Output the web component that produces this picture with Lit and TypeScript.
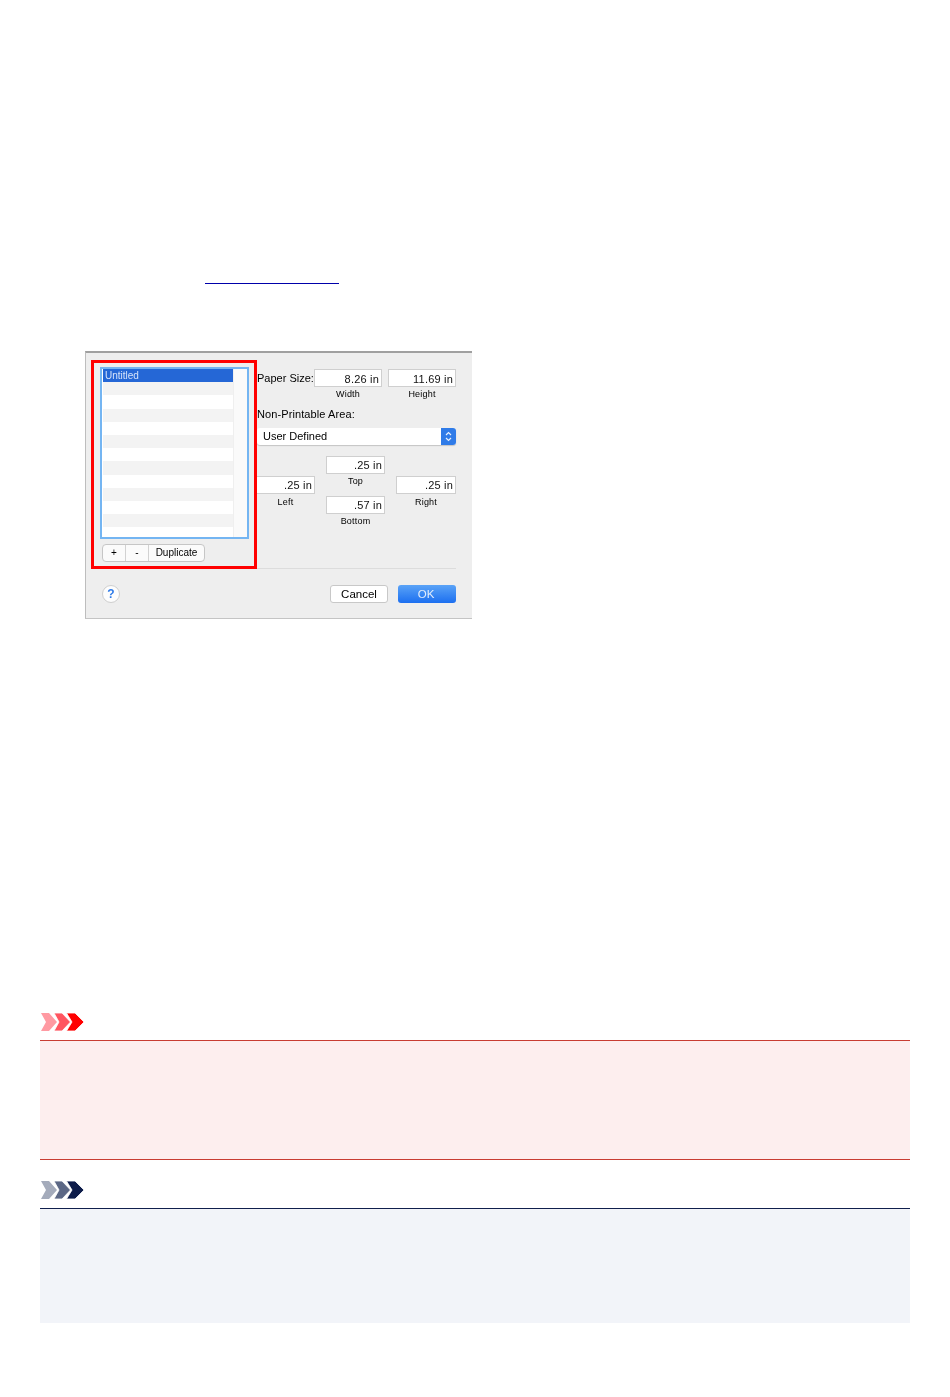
import { LitElement, html, css } from "lit";
import { customElement } from "lit/decorators.js";

const chevrons = (a: string, b: string, c: string) => html`
  <svg class="chev" width="44" height="18" viewBox="0 0 44 18">
    <polygon points="1,0 9,0 17,9 9,18 1,18 6,9" fill=${a}></polygon>
    <polygon points="14,0 22,0 30.500,9 22,18 14,18 19,9" fill=${b} stroke="#fff" stroke-width="0.800"></polygon>
    <polygon points="26.500,0 35,0 44,9 35,18 26.500,18 32,9" fill=${c} stroke="#fff" stroke-width="0.800"></polygon>
  </svg>`;

@customElement("app-root")
export class AppRoot extends LitElement {
  static styles = css`
    :host { display: block; height: 1397px; padding: 283px 40px 0; box-sizing: border-box; background: #fff; font-family: "Liberation Sans", Arial, sans-serif; overflow: hidden; }
    .link { width: 134px; height: 1px; margin-left: 165px; background: #0000aa; }
    .figure { position: relative; width: 387px; height: 268px; margin: 67px 0 0 45px; }
    .shot { box-sizing: border-box; width: 100%; height: 100%; padding: 14px 16px 0 14px; background: #eeeeee; border-top: 2px solid #a0a0a0; border-left: 1px solid #bdbdbd; border-bottom: 1px solid #c4c4c4; filter: blur(0.6px); color: #000; font-size: 10.5px; }
    .highlight { position: absolute; left: 6px; top: 9px; width: 166px; height: 209px; box-sizing: border-box; border: 3px solid #ff0000; }
    .main { display: flex; gap: 8px; height: 195px; }
    .left { width: 149px; flex: none; }
    .list { box-sizing: border-box; height: 172px; border: 2px solid #74b5f2; background: #fff; display: flex; }
    .rows { width: 130px; margin-left: 1px; flex: none; overflow: hidden; }
    .row { height: 13.2px; }
    .row.alt { background: #f3f3f3; }
    .row.sel { background: #2567d6; color: #d5e2fa; font-size: 10px; line-height: 13px; padding-left: 2px; box-sizing: border-box; }
    .track { flex: 1; background: #fafafa; border-left: 1px solid #efefef; }
    .seg { display: flex; width: 103px; height: 18px; margin: 5px 0 0 2px; box-sizing: border-box; border: 1px solid #c6c6c6; border-radius: 4px; background: #fbfbfb; font-size: 10px; line-height: 16px; text-align: center; }
    .seg span { width: 22px; border-right: 1px solid #d2d2d2; }
    .seg span:last-child { flex: 1; border: 0; }
    .right { flex: 1; padding-top: 2px; min-width: 0; }
    .paper { display: flex; gap: 6px; }
    .paper-label { width: 57px; margin-right: -6px; line-height: 18px; white-space: nowrap; font-size: 11px; }
    .field { flex: none; }
    .paper .field { width: 68px; }
    .input { box-sizing: border-box; height: 18px; background: #fff; border: 1px solid #cfcfcf; text-align: right; padding-right: 2px; line-height: 18px; font-size: 11px; letter-spacing: 0.2px; color: #111; white-space: nowrap; }
    .cap { margin-top: 2px; font-size: 9px; letter-spacing: 0.2px; line-height: 11px; text-align: center; }
    .np { margin-top: 8px; line-height: 13px; font-size: 11px; letter-spacing: 0.1px; }
    .select { display: flex; justify-content: space-between; height: 17px; margin-top: 7px; box-sizing: border-box; background: #fff; border-radius: 3px; box-shadow: 0 1px 1px #c4c4c4; padding-left: 6px; line-height: 16px; font-size: 11px; }
    .select i { width: 15px; display: flex; align-items: center; justify-content: center; background: #2f7be8; border-radius: 0 3px 3px 0; }
    .margins { display: flex; gap: 11px; margin: 11px 0 0 -1px; }
    .margins .input { line-height: 17px; }
    .col { width: 59px; flex: none; }
    .col.side { margin-top: 20px; }
    .col.side .cap { margin-top: 3px; }
    .col:last-child { width: 60px; }
    .col .field + .field { margin-top: 9px; }
    .foot { display: flex; align-items: flex-start; gap: 10px; margin-top: 6px; padding-top: 16px; border-top: 1px solid #dcdcdc; }
    .help { width: 18px; height: 18px; margin-left: 2px; box-sizing: border-box; border: 1px solid #cfcfcf; border-radius: 50%; background: #fdfdfd; color: #2f7be8; font-size: 12px; font-weight: 700; line-height: 16px; text-align: center; }
    .push { flex: 1; }
    .btn { width: 58px; height: 18px; box-sizing: border-box; border-radius: 3px; background: #fff; border: 1px solid #c8c8c8; text-align: center; line-height: 16px; font-size: 11.5px; }
    .btn.ok { border: 0; line-height: 18px; padding-right: 2px; background: linear-gradient(#5aa3f7, #1c6ff0); color: #e4eefc; }
    .chev { display: block; }
    .imp { margin-top: 394px; }
    .note { margin-top: 21px; }
    .panel { box-sizing: border-box; margin-top: 9px; }
    .panel.red { height: 120px; background: #fdeeee; border-top: 1px solid #c83c32; border-bottom: 1px solid #c83c32; }
    .panel.blue { height: 115px; background: #f2f4f9; border-top: 1px solid #101f4c; }
  `;

  render() {
    const rows = Array.from({ length: 12 }, (_, i) => i);
    return html`
      <div class="link"></div>
      <div class="figure">
        <div class="shot">
          <div class="main">
            <div class="left">
              <div class="list">
                <div class="rows">
                  <div class="row sel">Untitled</div>
                  ${rows.map((i) => html`<div class="row ${i % 2 === 0 ? "alt" : ""}"></div>`)}
                </div>
                <div class="track"></div>
              </div>
              <div class="seg"><span>+</span><span>-</span><span>Duplicate</span></div>
            </div>
            <div class="right">
              <div class="paper">
                <div class="paper-label">Paper Size:</div>
                <div class="field"><div class="input">8.26 in</div><div class="cap">Width</div></div>
                <div class="field"><div class="input">11.69 in</div><div class="cap">Height</div></div>
              </div>
              <div class="np">Non-Printable Area:</div>
              <div class="select">
                <span>User Defined</span>
                <i><svg width="9" height="13" viewBox="0 0 9 13" fill="none" stroke="#e8f0fd" stroke-width="1.2"><path d="M2 5l2.5-2.5L7 5M2 8l2.5 2.500L7 8"></path></svg></i>
              </div>
              <div class="margins">
                <div class="col side"><div class="field"><div class="input">.25 in</div><div class="cap">Left</div></div></div>
                <div class="col">
                  <div class="field"><div class="input">.25 in</div><div class="cap">Top</div></div>
                  <div class="field"><div class="input">.57 in</div><div class="cap">Bottom</div></div>
                </div>
                <div class="col side"><div class="field"><div class="input">.25 in</div><div class="cap">Right</div></div></div>
              </div>
            </div>
          </div>
          <div class="foot">
            <div class="help">?</div>
            <div class="push"></div>
            <div class="btn">Cancel</div>
            <div class="btn ok">OK</div>
          </div>
        </div>
        <div class="highlight"></div>
      </div>
      <div class="imp">${chevrons("#ff9aa2", "#ff5560", "#ff0000")}</div>
      <div class="panel red"></div>
      <div class="note">${chevrons("#a4abbb", "#5b6785", "#0d1c4a")}</div>
      <div class="panel blue"></div>
    `;
  }
}
